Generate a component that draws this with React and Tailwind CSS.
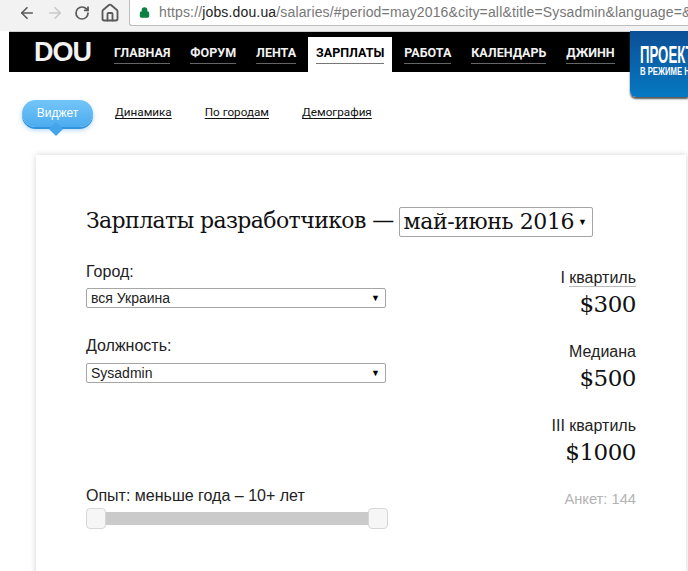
import { ArrowLeft, ArrowRight, RotateCw, Home, Lock } from 'lucide-react';

const navItems = ['ГЛАВНАЯ', 'ФОРУМ', 'ЛЕНТА', 'ЗАРПЛАТЫ', 'РАБОТА', 'КАЛЕНДАРЬ', 'ДЖИНН'];
const stats = [
  { label: 'I квартиль', value: '$300', underline: true },
  { label: 'Медиана', value: '$500' },
  { label: 'III квартиль', value: '$1000' },
];

function Select({ value }) {
  return (
    <div className="flex h-[20px] w-[300px] items-center justify-between rounded-[2px] border border-[#a6a6a6] bg-white pl-[4px] pr-[5px] text-[14px] leading-none text-[#222]">
      <span>{value}</span>
      <span className="text-[9px] text-black">▼</span>
    </div>
  );
}

function Thumb() {
  return <div className="h-[21px] w-[20px] shrink-0 rounded-[4px] border border-[#d6d6d6] bg-[#f6f6f6]" />;
}

export default function App() {
  return (
    <div className="relative h-[571px] w-[688px] overflow-hidden bg-white font-['Liberation_Sans',sans-serif] text-[#222]">
      {/* browser bar */}
      <div className="flex h-[31px] items-center bg-[#f2f2f2] pl-[18px]">
        <ArrowLeft className="h-[18px] w-[18px] shrink-0 -translate-y-[3px] text-[#5a5a5a]" strokeWidth={2.2} />
        <ArrowRight className="ml-[10px] h-[18px] w-[18px] shrink-0 -translate-y-[3px] text-[#c9c9c9]" strokeWidth={2.2} />
        <RotateCw className="ml-[10px] h-[16px] w-[16px] shrink-0 -translate-y-[3px] text-[#5a5a5a]" strokeWidth={2.6} />
        <Home className="ml-[10px] h-[20px] w-[20px] shrink-0 -translate-y-[3px] text-[#5a5a5a]" strokeWidth={2.2} />
        <div className="ml-[9px] flex h-[26px] min-w-0 flex-1 -translate-y-[3px] items-center overflow-hidden rounded-bl-[3px] border-b border-l border-[#bdbdbd] bg-white pl-[9px] text-[14px] tracking-[0.15px] whitespace-nowrap text-[#777]">
          <Lock className="mr-[9px] h-[11px] w-[11px] shrink-0 fill-[#0b8043] text-[#0b8043]" strokeWidth={2.5} />
          <span>https://<span className="text-[#222]">jobs.dou.ua</span>/salaries/#period=may2016&amp;city=all&amp;title=Sysadmin&amp;language=&amp;</span>
        </div>
      </div>

      {/* site nav */}
      <div className="ml-[9px] flex h-[41px] items-end border-t border-[#cfcfcf] bg-black">
        <div className="mb-[3px] ml-[25px] w-[80px] text-[27px] leading-[34px] font-bold tracking-[-1px] text-[#f2f2f2]">DOU</div>
        <div className="flex gap-[20px] font-['Roboto',sans-serif] text-[12.5px] font-bold">
          {navItems.map((item) =>
            item === 'ЗАРПЛАТЫ' ? (
              <div key={item} className="-mx-[8px] h-[35px] bg-white px-[8px] pt-[7px] text-black">
                <span className="block border-b border-[#777] pb-[2px] leading-[17px]">{item}</span>
              </div>
            ) : (
              <div key={item} className="h-[35px] pt-[7px] text-[#f2f2f2]">
                <span className="block border-b border-[#666] pb-[2px] leading-[17px]">{item}</span>
              </div>
            ),
          )}
        </div>
      </div>

      {/* banner */}
      <div className="absolute top-[31px] left-[630px] h-[66px] w-[58px] overflow-hidden rounded-bl-[6px] bg-gradient-to-b from-[#0c4f96] to-[#0579c2] pt-[13px] pl-[10px] font-bold whitespace-nowrap text-white shadow-[0_2px_2px_#555]">
        <div className="origin-left scale-x-[0.55] text-[24px] leading-[21px]">ПРОЕКТ</div>
        <div className="mt-[1px] origin-left scale-x-[0.7] text-[11px] leading-[11px]">В РЕЖИМЕ Н</div>
      </div>

      {/* tabs */}
      <div className="flex h-[83px] items-center pb-[3px] pl-[22px]">
        <div className="relative flex h-[27px] w-[71px] translate-y-[1px] items-center justify-center rounded-[14px] bg-gradient-to-b from-[#73c5f7] to-[#4cabef] text-[12px] text-white shadow-[0_2px_0_#2f93e0,0_3px_5px_rgba(90,170,230,0.5)]">
          Виджет
          <div className="absolute top-[27px] left-[29px] h-[10px] w-[10px] -translate-y-[3px] rotate-45 bg-[#44a4ea]" />
        </div>
        <div className="ml-[22px] flex translate-y-[1px] gap-[33px] font-['Roboto',sans-serif] text-[11.7px] text-[#111] underline underline-offset-2">
          <span>Динамика</span>
          <span>По городам</span>
          <span>Демография</span>
        </div>
      </div>

      {/* card */}
      <div className="ml-[36px] h-[440px] w-[650px] bg-white px-[50px] pt-[52px] shadow-[0_0_6px_rgba(0,0,0,0.18)]">
        <div className="flex items-center font-['DejaVu_Serif',serif] text-[22px] leading-[30px] text-[#111]">
          <span className="-mt-[2px] tracking-[-0.6px]">Зарплаты разработчиков —</span>
          <div className="ml-[5px] flex h-[30px] w-[194px] items-center justify-between rounded-[2px] border border-[#a6a6a6] pr-[5px] pl-[4px] tracking-[-0.4px]">
            <span>май-июнь 2016</span>
            <span className="font-['Liberation_Sans',sans-serif] text-[9px] text-black">▼</span>
          </div>
        </div>

        <div className="mt-[12px] flex justify-between">
          <div className="w-[300px]">
            <div className="h-[40px] pt-[14px] text-[16px] leading-[18px]">Город:</div>
            <div className="mt-[-1px]"><Select value="вся Украина" /></div>
            <div className="mt-[29px] text-[16px] leading-[18px]">Должность:</div>
            <div className="mt-[8px]"><Select value="Sysadmin" /></div>
            <div className="mt-[104px] text-[16px] leading-[18px]">Опыт: меньше года – 10+ лет</div>
            <div className="relative mt-[3px] flex h-[21px] w-[302px] items-center justify-between">
              <div className="absolute inset-x-[5px] top-[4px] h-[13px] bg-[#cacaca]" />
              <div className="relative"><Thumb /></div>
              <div className="relative"><Thumb /></div>
            </div>
          </div>

          <div className="flex flex-col items-end pt-[20px] text-right">
            {stats.map((s) => (
              <div key={s.label} className="mb-[24px] flex flex-col items-end">
                <div className="text-[16px] leading-[18px]">
                  {s.underline ? (
                    <>I <span className="border-b border-[#bbb]">квартиль</span></>
                  ) : s.label}
                </div>
                <div className="mt-[2px] font-['DejaVu_Serif',serif] text-[23px] leading-[30px] tracking-[-0.5px] text-[#111]">{s.value}</div>
              </div>
            ))}
            <div className="-mt-[1px] text-[14.7px] leading-[18px] text-[#b3b3b3]">Анкет: 144</div>
          </div>
        </div>
      </div>
    </div>
  );
}
